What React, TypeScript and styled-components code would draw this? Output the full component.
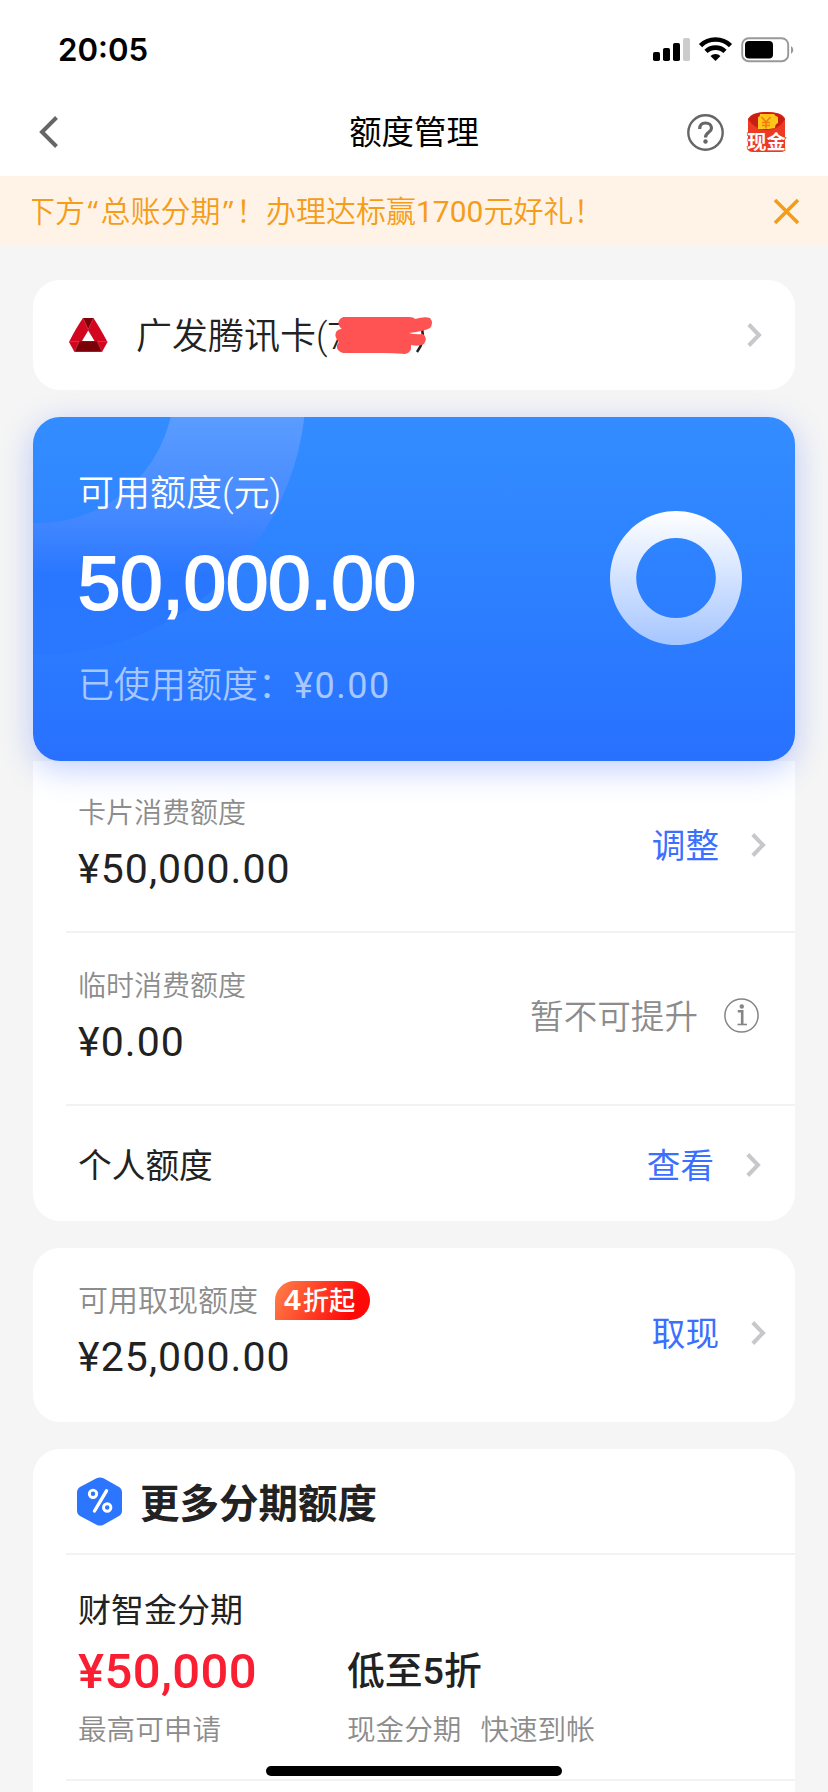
import React from "react";
import styled, { createGlobalStyle } from "styled-components";

const Global = createGlobalStyle`
  * { box-sizing: border-box; }
  html, body { margin: 0; padding: 0; background: #f5f5f5; overflow: hidden; }
  body { font-family: Roboto, "Noto Sans CJK SC", sans-serif; color: #222; }
  svg { display: block; flex: none; overflow: visible; }
`;

const Screen = styled.div`
  position: relative;
  width: 828px;
  height: 1792px;
  overflow: hidden;
  background: #f5f5f5;
  display: flex;
  flex-direction: column;
`;

const StatusBar = styled.div`
  height: 88px;
  flex: none;
  background: #fff;
  display: flex;
  justify-content: space-between;
  padding: 0 33px 0 58px;
`;

const Clock = styled.div`
  font: 600 31.2px/100px Inter, sans-serif;
  color: #000;
`;

const StatusIcons = styled.div`
  display: flex;
  align-items: flex-start;
  padding-top: 36px;
`;

const NavBar = styled.div`
  height: 88px;
  flex: none;
  background: #fff;
  display: grid;
  grid-template-columns: 1fr auto 1fr;
  align-items: center;
  padding: 0 39px;
`;

const NavTitle = styled.h1`
  margin: 0;
  padding-top: 2px;
  font-size: 32.4px;
  line-height: 86px;
  font-weight: 400;
  color: #000;
`;

const NavActions = styled.div`
  display: flex;
  justify-content: flex-end;
  align-items: center;
  gap: 23px;
  padding-right: 2px;
`;

const Notice = styled.div`
  height: 70px;
  flex: none;
  background: #fef3e6;
  display: flex;
  justify-content: space-between;
  align-items: center;
  padding: 0 29px 0 32px;
  color: #f59d18;
`;

const NoticeWindow = styled.div`
  width: 640px;
  overflow: hidden;
`;

const NoticeText = styled.div`
  margin-left: -7px;
  font-size: 30px;
  line-height: 70px;
  font-weight: 350;
  white-space: nowrap;
`;

const Quote = styled.span`
  display: inline-block;
  width: 15.5px;
  text-align: center;
  font-family: "Open Sans", sans-serif;
  font-weight: 400;
`;

const NoticeFigure = styled.span`
  font-weight: 400;
`;

const Content = styled.div`
  padding: 34px 33px 0;
`;

const Card = styled.section`
  background: #fff;
  border-radius: 27px;
  margin-bottom: 27px;
`;

const AccountCard = styled(Card)`
  height: 110px;
  display: flex;
  align-items: center;
  padding: 0 33px 0 36px;
`;

const AccountName = styled.div`
  position: relative;
  flex: 1;
  margin-left: 28px;
  padding-top: 4px;
  font-size: 36px;
  line-height: 106px;
  font-weight: 350;
`;

const Scribble = styled.svg`
  position: absolute;
  left: 199px;
  top: 37px;
`;

const LimitCard = styled.section`
  position: relative;
  height: 344px;
  border-radius: 27px;
  background: linear-gradient(180deg, #338dff 0%, #2d80ff 50%, #2871ff 100%);
  box-shadow: 0 8px 32px rgba(60, 105, 255, 0.32);
  display: flex;
  justify-content: space-between;
  padding: 53px 53px 0 45px;
  color: #fff;
`;

const CardArcs = styled.svg`
  position: absolute;
  inset: 0;
`;

const LimitInfo = styled.div`
  position: relative;
`;

const LimitLabel = styled.div`
  font-size: 36px;
  line-height: 48px;
  font-weight: 350;
`;

const LimitValue = styled.div`
  margin-top: 20px;
  font: 400 76px/90px "Liberation Sans", sans-serif;
  -webkit-text-stroke: 2.2px #fff;
`;

const LimitUsed = styled.div`
  margin-top: 34px;
  font-size: 36px;
  line-height: 48px;
  font-weight: 350;
  color: #a6c7ff;
`;

const UsedAmount = styled.span`
  font-weight: 400;
  letter-spacing: 1.5px;
`;

const Ring = styled.svg`
  position: relative;
  margin-top: 41px;
`;

const ListCard = styled(Card)`
  border-radius: 0 0 27px 27px;
  padding-left: 33px;
`;

const Row = styled.div<{ $h: number; $line?: boolean }>`
  height: ${(p) => p.$h}px;
  display: flex;
  justify-content: space-between;
  border-bottom: ${(p) => (p.$line ? "2px solid #f2f2f2" : "none")};
  padding-left: 12px;
`;

const RowInfo = styled.div<{ $top: number }>`
  padding-top: ${(p) => p.$top}px;
`;

const Label = styled.div<{ $size?: number }>`
  display: flex;
  height: 40px;
  font-size: ${(p) => p.$size ?? 28}px;
  line-height: 40px;
  font-weight: 350;
  color: #8c8c8c;
`;

const Amount = styled.div<{ $gap?: number }>`
  font-size: 41px;
  line-height: 48px;
  margin-top: ${(p) => p.$gap ?? 11}px;
  font-weight: 400;
  letter-spacing: 1.1px;
  color: #222;
`;

const RowName = styled.div<{ $size?: number }>`
  font-size: ${(p) => p.$size ?? 33.7}px;
  line-height: 48px;
  font-weight: 400;
`;

const Action = styled.div<{ $top: number; $right?: number; $muted?: boolean }>`
  display: flex;
  align-items: center;
  height: 48px;
  margin-top: ${(p) => p.$top}px;
  margin-right: ${(p) => p.$right ?? 29}px;
  gap: ${(p) => (p.$muted ? 26 : 32)}px;
  font-size: 33.6px;
  line-height: 48px;
  font-weight: ${(p) => (p.$muted ? 350 : 400)};
  color: ${(p) => (p.$muted ? "#8c8c8c" : "#3a6fff")};
`;

const ActionText = styled.span`
  padding-top: 3px;
`;

const Badge = styled.span`
  height: 39px;
  width: 95px;
  margin: 0 0 0 17px;
  padding-left: 9px;
  border-radius: 20px 20px 20px 0;
  background: linear-gradient(115deg, #ff7a45 5%, #ff0808 80%);
  color: #fff;
  font-size: 26.3px;
  line-height: 38px;
  font-weight: 500;
  white-space: nowrap;
`;

const BadgeNumber = styled.span`
  font: 700 30px/38px "Liberation Sans", sans-serif;
  letter-spacing: 2px;
`;

const CashCard = styled(Card)`
  padding-left: 33px;
`;

const MoreCard = styled(Card)`
  height: 400px;
  border-radius: 27px 27px 0 0;
  padding-left: 33px;
`;

const MoreHead = styled.div`
  height: 106px;
  display: flex;
  align-items: center;
  gap: 17px;
  padding-left: 11px;
  border-bottom: 2px solid #f2f2f2;
`;

const MoreTitle = styled.h2`
  margin: 0;
  padding-top: 8px;
  font-size: 39.5px;
  line-height: 96px;
  font-weight: 700;
`;

const Plan = styled.div`
  height: 226px;
  padding: 32px 0 0 12px;
  border-bottom: 2px solid #f2f2f2;
`;

const PlanGrid = styled.div`
  display: grid;
  grid-template-columns: 269px 1fr;
  align-items: center;
  grid-template-rows: 64px 50px;
  margin-top: 3px;
`;

const PlanAmount = styled.div`
  padding-top: 2px;
  font-size: 49px;
  font-weight: 500;
  letter-spacing: 0.4px;
  color: #fa1e32;
`;

const PlanRate = styled.div`
  padding-top: 2px;
  font-size: 37.8px;
  line-height: 50px;
  font-weight: 500;
`;

const PlanNote = styled.div`
  display: flex;
  gap: 19px;
  font-size: 28.6px;
  font-weight: 350;
  color: #8c8c8c;
`;

const HomeBar = styled.div`
  position: absolute;
  left: 266px;
  bottom: 16px;
  width: 296px;
  height: 10px;
  border-radius: 5px;
  background: #000;
`;

const Chevron = () => (
  <svg width="15" height="24" viewBox="0 0 15 24" fill="none" stroke="#c7c7cc" strokeWidth="4">
    <path d="M1.8 1.500 12 12 1.8 22.500" />
  </svg>
);

const Signal = () => (
  <svg width="142" height="26" viewBox="0 0 142 26">
    <rect x="0" y="16" width="7" height="9" rx="1.8" />
    <rect x="10" y="12" width="7" height="13" rx="1.8" />
    <rect x="20" y="7" width="7" height="18" rx="1.8" />
    <rect x="30" y="2" width="7" height="23" rx="1.8" fill="#ccc" />
    <g fill="none" stroke="#000" strokeWidth="4.6">
      <path d="M47.5 9.6A21.6 21.6 0 0 1 77.500 9.600" />
      <path d="M53 15.400A13.800 13.800 0 0 1 72 15.400" />
    </g>
    <path d="M62.500 25 57.500 20A7.200 7.200 0 0 1 67.500 20Z" />
    <rect x="89.200" y="2.200" width="46" height="23" rx="6.500" fill="none" stroke="#999" strokeWidth="1.900" />
    <rect x="92" y="5" width="28" height="17.500" rx="4" />
    <path d="M138 10v8a4.600 4.600 0 0 0 0-8Z" fill="#999" />
  </svg>
);

const BackIcon = () => (
  <svg width="20" height="32" viewBox="0 0 20 32" fill="none" stroke="#666" strokeWidth="4">
    <path d="M17.500 1.500 3 16 17.500 30.500" />
  </svg>
);

const HelpIcon = () => (
  <svg width="37" height="37" viewBox="0 0 37 37" fill="none" stroke="#666">
    <circle cx="18.500" cy="18.500" r="17.200" strokeWidth="2.400" />
    <path d="M12.700 15C12.700 11 15 9 18.500 9S24.500 11 24.500 14C24.500 18.500 18.500 18 18.500 23.500" strokeWidth="3.200" />
    <circle cx="18.500" cy="27.500" r="2.200" fill="#666" stroke="none" />
  </svg>
);

const CashIcon = () => (
  <svg width="40" height="42" viewBox="0 0 40 42">
    <path d="M1 8Q4 1 20 1T38 8V38Q38 41 34 41H6Q1 41 1 38Z" fill="#ee3a24" />
    <path d="M1 8Q8 19 20 19T38 8Q33 1 20 1T1 8Z" fill="#c81e14" />
    <path d="M13 3H27Q28 5 31 6V12Q28 13 28 17L22 18H11V6Q13 6 13 3Z" fill="#ffc61a" />
    <path d="M14.500 6l4.500 5 4.500-5M19 11v6.500M15 11.500h8M15 14.500h8" stroke="#f47b10" strokeWidth="1.600" fill="none" />
    <text x="19.500" y="37.500" textAnchor="middle" fontFamily="Noto Sans CJK SC" fontSize="19.200" fontWeight="700" fill="#fff" stroke="#ee3a24" strokeWidth="1.500" paintOrder="stroke">现金</text>
  </svg>
);

const CloseIcon = () => (
  <svg width="25" height="25" viewBox="0 0 25 25" stroke="#f59d18" strokeWidth="3.600">
    <path d="M1 1 24 24M24 1 1 24" />
  </svg>
);

const BankLogo = () => (
  <svg width="39" height="34" viewBox="0 0 39 34">
    <path d="M14 0H24.500Q31 10 38.500 24L33 34H5.500L0 24Q7 10 14 0Z" fill="#d2071f" />
    <path d="M14 0H24.500L19.200 11.500Z" fill="#7c0008" />
    <path d="M10 23.500H28.500L33 33H5.500Z" fill="#7c0008" />
    <path d="M19.200 12.500 25.500 23H13Z" fill="#fff" />
    <path d="M14 0 19.200 11.500M24.500 0 19.200 11.500M10 23.500 5.500 34M28.500 23.500 33 34M0 23.500H10M28.500 23.500H38.500" stroke="#ee5562" strokeWidth=".5" fill="none" />
  </svg>
);

const InfoSvg = styled.svg`
  margin-bottom: 2px;
`;

const InfoIcon = () => (
  <InfoSvg width="35" height="35" viewBox="0 0 35 35" fill="none" stroke="#858585">
    <circle cx="17.500" cy="17.500" r="16.600" strokeWidth="1.500" />
    <circle cx="17.800" cy="8.500" r="2.200" fill="#858585" stroke="none" />
    <path d="M13.800 13.200H18.200V26.500" strokeWidth="2.600" />
    <path d="M13.500 26.500H23" strokeWidth="1.600" />
  </InfoSvg>
);

const PercentIcon = () => (
  <svg width="46" height="49" viewBox="0 0 46 49">
    <path d="M19.500 1.300Q23 -.5 26.500 1.300L42 10Q45 12 45 15.500V33.500Q45 37 42 39L26.500 47.700Q23 49.500 19.500 47.700L3 39Q0 37 0 33.500V15.500Q0 12 3 10Z" fill="#2b75ff" />
    <g fill="none" stroke="#fff" strokeWidth="2.900">
      <circle cx="16" cy="16.800" r="3.700" />
      <circle cx="30.200" cy="30.500" r="3.700" />
      <path d="M29.500 13.800 17.500 34" strokeLinecap="round" strokeWidth="3.400" />
    </g>
  </svg>
);

export default function App() {
  return (
    <Screen>
      <Global />
      <StatusBar>
        <Clock>20:05</Clock>
        <StatusIcons><Signal /></StatusIcons>
      </StatusBar>
      <NavBar>
        <BackIcon />
        <NavTitle>额度管理</NavTitle>
        <NavActions><HelpIcon /><CashIcon /></NavActions>
      </NavBar>
      <Notice>
        <NoticeWindow>
          <NoticeText>
            下方<Quote>“</Quote>总账分期<Quote>”</Quote>！办理达标赢<NoticeFigure>1700</NoticeFigure>元好礼！
          </NoticeText>
        </NoticeWindow>
        <CloseIcon />
      </Notice>
      <Content>
        <AccountCard>
          <BankLogo />
          <AccountName>
            广发腾讯卡(7
            <Scribble width="100" height="38" viewBox="0 0 100 38">
              <path d="M82 35Q90 25 87 11" stroke="#222" strokeWidth="2.600" fill="none" />
              <path d="M8 0H74Q79 0 80 2Q90-1 95 1Q99 6 95 11Q90 14 74 16Q80 18 88 17Q93 21 89 27Q84 30 76 28Q77 36 70 37Q58 36 48 36H8Q1 34 2 28L4 25Q-1 20 1 15Q3 12 7 12Q1 7 5 2Z" fill="#ff5252" />
            </Scribble>
          </AccountName>
          <Chevron />
        </AccountCard>
        <LimitCard>
          <CardArcs width="762" height="344" viewBox="0 0 762 344">
            <defs>
              <linearGradient id="arc" x1="0" y1="0" x2="0" y2="240" gradientUnits="userSpaceOnUse">
                <stop offset="0" stopColor="#5a9cff" />
                <stop offset=".42" stopColor="#4388ff" />
                <stop offset=".65" stopColor="#2a77ff" />
                <stop offset="1" stopColor="#2a78ff" />
              </linearGradient>
              <clipPath id="card"><rect width="762" height="344" rx="27" /></clipPath>
            </defs>
            <circle cx="5" cy="-30" r="202" fill="none" stroke="url(#arc)" strokeWidth="132" clipPath="url(#card)" />
          </CardArcs>
          <LimitInfo>
            <LimitLabel>可用额度(元)</LimitLabel>
            <LimitValue>50,000.00</LimitValue>
            <LimitUsed>已使用额度：<UsedAmount>¥0.00</UsedAmount></LimitUsed>
          </LimitInfo>
          <Ring width="133" height="134" viewBox="0 0 133 134">
            <defs>
              <linearGradient id="ring" x1="0" y1="0" x2="0" y2="1">
                <stop offset="0" stopColor="#fff" />
                <stop offset="1" stopColor="#a6c6ff" />
              </linearGradient>
            </defs>
            <path fillRule="evenodd" fill="url(#ring)" d="M67 0a66 67 0 1 0 .01 0ZM67 27a39.800 40 0 1 1-.01 0Z" />
          </Ring>
        </LimitCard>
        <ListCard>
          <Row $h={172} $line>
            <RowInfo $top={33}><Label>卡片消费额度</Label><Amount>¥50,000.00</Amount></RowInfo>
            <Action $top={60}><ActionText>调整</ActionText><Chevron /></Action>
          </Row>
          <Row $h={173} $line>
            <RowInfo $top={34}><Label>临时消费额度</Label><Amount>¥0.00</Amount></RowInfo>
            <Action $top={59} $right={36} $muted><ActionText>暂不可提升</ActionText><InfoIcon /></Action>
          </Row>
          <Row $h={115}>
            <RowInfo $top={37}><RowName>个人额度</RowName></RowInfo>
            <Action $top={35} $right={34}><ActionText>查看</ActionText><Chevron /></Action>
          </Row>
        </ListCard>
        <CashCard>
          <Row $h={174}>
            <RowInfo $top={33}>
              <Label $size={30}>可用取现额度<Badge><BadgeNumber>4</BadgeNumber>折起</Badge></Label>
              <Amount $gap={12}>¥25,000.00</Amount>
            </RowInfo>
            <Action $top={61}><ActionText>取现</ActionText><Chevron /></Action>
          </Row>
        </CashCard>
        <MoreCard>
          <MoreHead><PercentIcon /><MoreTitle>更多分期额度</MoreTitle></MoreHead>
          <Plan>
            <RowName $size={33}>财智金分期</RowName>
            <PlanGrid>
              <PlanAmount>¥50,000</PlanAmount>
              <PlanRate>低至5折</PlanRate>
              <PlanNote>最高可申请</PlanNote>
              <PlanNote><span>现金分期</span><span>快速到帐</span></PlanNote>
            </PlanGrid>
          </Plan>
        </MoreCard>
      </Content>
      <HomeBar />
    </Screen>
  );
}
